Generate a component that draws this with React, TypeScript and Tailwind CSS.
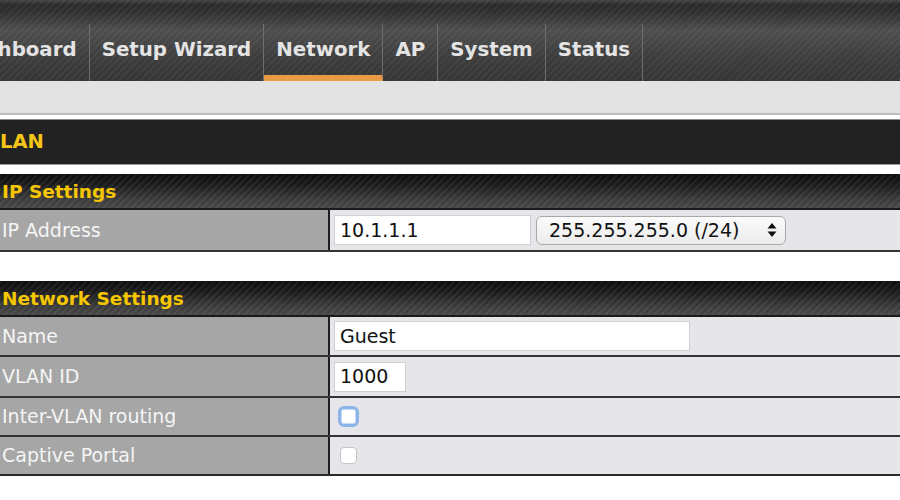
import React from "react";

const navBg =
  "bg-[image:repeating-linear-gradient(135deg,rgba(255,255,255,0.045)_0px,rgba(255,255,255,0.045)_2px,transparent_2px,transparent_5px),linear-gradient(to_bottom,#444_0%,#2a2a2a_6%,#2f2f2f_14%,#4e4e4e_38%,#3d3d3d_70%,#353535_100%)]";

const headBg =
  "bg-[image:repeating-linear-gradient(135deg,rgba(255,255,255,0.06)_0px,rgba(255,255,255,0.06)_2px,transparent_2px,transparent_5px),linear-gradient(to_bottom,#0e0e0e_0%,#1c1c1c_30%,#3c3c3c_75%,#474747_100%)]";

function Tab({ label, active, className = "" }: { label: string; active?: boolean; className?: string }) {
  return (
    <div
      className={`h-[57px] flex items-center px-3 border-r border-[#6e6e6e] text-[19.8px] font-bold text-[#e4e4e4] whitespace-nowrap ${
        active ? "border-b-[6px] border-b-[#e99a45]" : "pb-[6px]"
      } ${className}`}
    >
      {label}
    </div>
  );
}

function SectionHeader({ title }: { title: string }) {
  return (
    <div className={`h-[36px] flex items-center pl-[2px] border-t border-[#111] border-b-2 border-b-[#1a1a1a] ${headBg}`}>
      <span className="text-[18.5px] font-bold text-[#f6c700]">{title}</span>
    </div>
  );
}

function Row({ label, h, children, last }: { label: string; h: string; children: React.ReactNode; last?: boolean }) {
  return (
    <div className={`flex ${h} border-b-2 ${last ? "border-[#2a2a2a]" : "border-[#333]"}`}>
      <div className="w-[330px] shrink-0 bg-[#a6a6a6] border-r-2 border-[#1e1e1e] flex items-center pl-[2px] text-[19px] text-[#f5f5f5]">
        {label}
      </div>
      <div className="flex-1 bg-[#e6e6ea] flex items-center pl-[4px] gap-[5px]">{children}</div>
    </div>
  );
}

function TextBox({ value, w }: { value: string; w: string }) {
  return (
    <div className={`${w} h-[30px] bg-white border border-[#d0d0d0] flex items-center pl-[5px] text-[19px] text-[#111]`}>
      {value}
    </div>
  );
}

export default function App() {
  return (
    <div
      className="w-[900px] h-[500px] overflow-hidden bg-white"
      style={{ fontFamily: '"DejaVu Sans", Verdana, sans-serif' }}
    >
      {/* Top nav */}
      <div className={`h-[81px] flex items-end ${navBg}`}>
        <Tab label="Dashboard" className="ml-[-56px]" />
        <Tab label="Setup Wizard" />
        <Tab label="Network" active />
        <Tab label="AP" />
        <Tab label="System" />
        <Tab label="Status" />
      </div>
      {/* gray band */}
      <div className="h-[34px] bg-[#e3e3e3] border-b-2 border-[#bdbdbd]" />
      <div className="h-[4px] bg-white" />
      {/* LAN bar */}
      <div className="h-[46px] bg-[#222] border-t border-[#8a8a8a] border-b border-b-[#a0a0a0] flex items-center pl-0">
        <span className="text-[19.5px] font-bold text-[#f5c518]">LAN</span>
      </div>
      <div className="h-[9px]" />
      {/* IP Settings */}
      <SectionHeader title="IP Settings" />
      <Row label="IP Address" h="h-[42px]">
        <TextBox value="10.1.1.1" w="w-[197px]" />
        <div className="w-[250px] h-[29px] rounded-[6px] border border-[#a8a8a8] bg-[linear-gradient(to_bottom,#fbfbfb,#ececec)] flex items-center pl-[12px] pr-[8px] text-[19px] text-[#111]">
          <span className="flex-1">255.255.255.0 (/24)</span>
          <svg width="10" height="16" viewBox="0 0 10 16">
            <path d="M5 1 L9.5 6.5 L0.5 6.5 Z" fill="#111" />
            <path d="M5 15 L9.5 9.5 L0.5 9.5 Z" fill="#111" />
          </svg>
        </div>
      </Row>
      <div className="h-[29px]" />
      {/* Network Settings */}
      <SectionHeader title="Network Settings" />
      <Row label="Name" h="h-[40px]">
        <TextBox value="Guest" w="w-[356px]" />
      </Row>
      <Row label="VLAN ID" h="h-[41px]">
        <TextBox value="1000" w="w-[72px]" />
      </Row>
      <Row label="Inter-VLAN routing" h="h-[39px]">
        <div className="ml-[4px] w-[21px] h-[21px] rounded-[6px] border-[3px] border-[#8cb4e8] bg-white shadow-[inset_0_0_0_1px_#c9d9f0]" />
      </Row>
      <Row label="Captive Portal" h="h-[39px]" last>
        <div className="ml-[6px] w-[17px] h-[17px] rounded-[4px] border border-[#c4c4c4] bg-white" />
      </Row>
    </div>
  );
}
